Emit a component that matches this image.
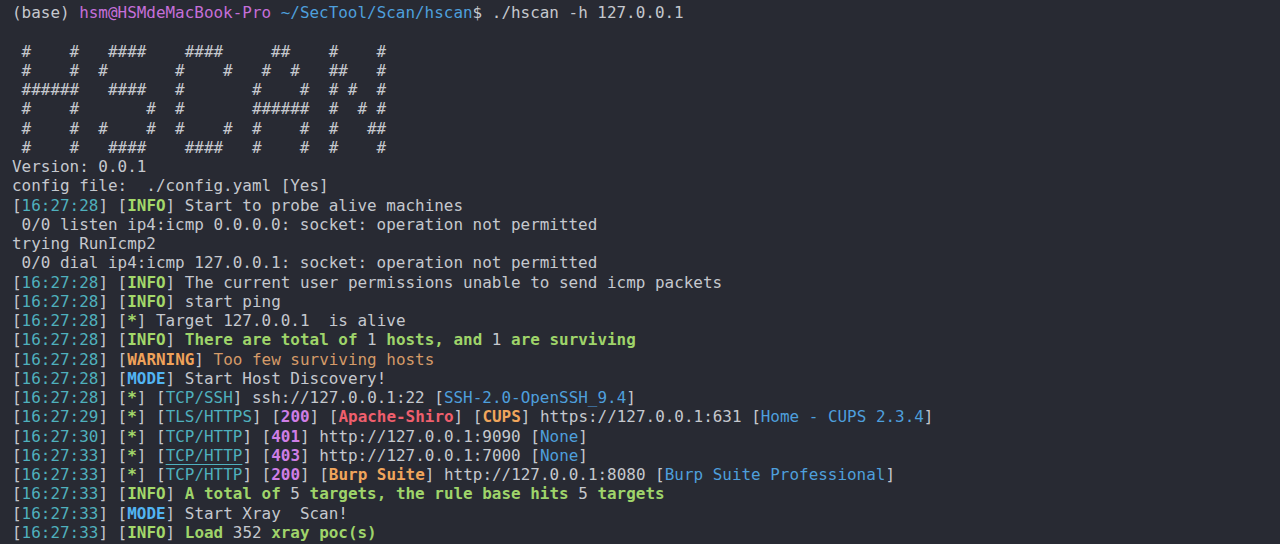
import React from 'react';

type Seg = [string, string?];

const txt = 'text-[#c5c8ce]';
const ts = 'text-[#4fb0bd]';
const ok = 'text-[#a3d86a] font-bold';
const okMsg = 'text-[#9fd46a] font-bold';
const warn = 'text-[#f0a25a] font-bold';
const warnMsg = 'text-[#d59a68]';
const mode = 'text-[#52b4f2] font-bold';
const code = 'text-[#cf7ee6] font-bold';
const red = 'text-[#ef5f6d] font-bold';
const orange = 'text-[#f0a55c] font-bold';
const link = 'text-[#4e9fdc]';

// "HSCAN" banner
const art = [
  ' #    #   ####    ####     ##    #    #',
  ' #    #  #       #    #   #  #   ##   #',
  ' ######   ####   #       #    #  # #  #',
  ' #    #       #  #       ######  #  # #',
  ' #    #  #    #  #    #  #    #  #   ##',
  ' #    #   ####    ####   #    #  #    #',
];

const time = (t: string): Seg[] => [['['], [t, ts], ['] ']];
const tag = (t: string, c: string): Seg[] => [['['], [t, c], [']']];

const lines: Seg[][] = [
  [['(base) '], ['hsm@HSMdeMacBook-Pro', 'text-[#c56fd9]'], [' '], ['~/SecTool/Scan/hscan', 'text-[#4e9fdc]'], ['$ ./hscan -h 127.0.0.1']],
  [[' ']],
  ...art.map((a): Seg[] => [[a]]),
  [['Version: 0.0.1']],
  [['config file:  ./config.yaml [Yes]']],
  [...time('16:27:28'), ...tag('INFO', ok), [' Start to probe alive machines']],
  [[' 0/0 listen ip4:icmp 0.0.0.0: socket: operation not permitted']],
  [['trying RunIcmp2']],
  [[' 0/0 dial ip4:icmp 127.0.0.1: socket: operation not permitted']],
  [...time('16:27:28'), ...tag('INFO', ok), [' The current user permissions unable to send icmp packets']],
  [...time('16:27:28'), ...tag('INFO', ok), [' start ping']],
  [...time('16:27:28'), ...tag('*', ok), [' Target 127.0.0.1  is alive']],
  [...time('16:27:28'), ...tag('INFO', ok), [' '], ['There are total of', okMsg], [' 1 '], ['hosts, and', okMsg], [' 1 '], ['are surviving', okMsg]],
  [...time('16:27:28'), ...tag('WARNING', warn), [' '], ['Too few surviving hosts', warnMsg]],
  [...time('16:27:28'), ...tag('MODE', mode), [' Start Host Discovery!']],
  [...time('16:27:28'), ...tag('*', ok), [' '], ...tag('TCP/SSH', ts), [' ssh://127.0.0.1:22 '], ...tag('SSH-2.0-OpenSSH_9.4', link)],
  [...time('16:27:29'), ...tag('*', ok), [' '], ...tag('TLS/HTTPS', ts), [' '], ...tag('200', code), [' '], ...tag('Apache-Shiro', red), [' '], ...tag('CUPS', orange), [' https://127.0.0.1:631 '], ...tag('Home - CUPS 2.3.4', link)],
  [...time('16:27:30'), ...tag('*', ok), [' '], ...tag('TCP/HTTP', ts), [' '], ...tag('401', code), [' http://127.0.0.1:9090 '], ...tag('None', link)],
  [...time('16:27:33'), ...tag('*', ok), [' '], ...tag('TCP/HTTP', ts + ' underline underline-offset-[3px]'), [' '], ...tag('403', code), [' http://127.0.0.1:7000 '], ...tag('None', link)],
  [...time('16:27:33'), ...tag('*', ok), [' '], ...tag('TCP/HTTP', ts), [' '], ...tag('200', code), [' '], ...tag('Burp Suite', orange), [' http://127.0.0.1:8080 '], ...tag('Burp Suite Professional', link)],
  [...time('16:27:33'), ...tag('INFO', ok), [' '], ['A total of', okMsg], [' 5 '], ['targets, the rule base hits', okMsg], [' 5 '], ['targets', okMsg]],
  [...time('16:27:33'), ...tag('MODE', mode), [' Start Xray  Scan!']],
  [...time('16:27:33'), ...tag('INFO', ok), [' '], ['Load', okMsg], [' 352 '], ['xray poc(s)', okMsg]],
];

export default function App() {
  return (
    <div className="w-[1280px] h-[544px] overflow-hidden bg-[#282a33] pl-[12px] pt-[3px] font-['DejaVu_Sans_Mono',monospace] text-[15.95px] leading-[19.25px] text-[#c5c8ce]">
      {lines.map((line, i) => (
        <div key={i} className="whitespace-pre h-[19.25px]">
          {line.map(([t, c], j) => (
            <span key={j} className={c ?? txt}>
              {t}
            </span>
          ))}
        </div>
      ))}
    </div>
  );
}
